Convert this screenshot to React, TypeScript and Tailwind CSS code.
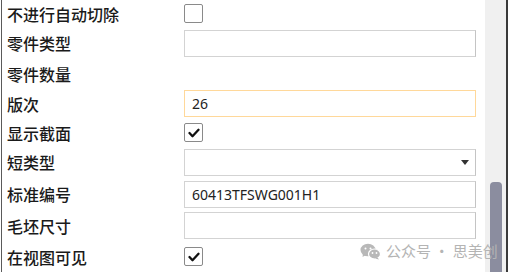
import React from "react";

const cjk = { fontFamily: '"Noto Sans CJK SC", "Noto Sans", sans-serif' };
const latin = { fontFamily: '"Noto Sans", "Noto Sans CJK SC", sans-serif' };

function Check({ checked }: { checked?: boolean }) {
  return (
    <div className="w-[19px] h-[19px] border-[1.5px] border-[#8a8a8a] rounded-[2px] bg-white flex items-center justify-center">
      {checked && (
        <svg width="12" height="10" viewBox="0 0 12 10">
          <path d="M1.5 5 L4.5 8.2 L10.5 1.8" fill="none" stroke="#111" strokeWidth="2.3" strokeLinecap="round" strokeLinejoin="round" />
        </svg>
      )}
    </div>
  );
}

function Box({ value, focus, dropdown }: { value?: string; focus?: boolean; dropdown?: boolean }) {
  return (
    <div
      className={
        "w-[292px] h-[27px] bg-white flex items-center pl-[7px] pr-[6px] text-[14px] text-[#222] border-[1.5px] " +
        (focus ? "border-[#ffd89a]" : "border-[#d3d3d3] border-r-[#c4c4c4]")
      }
      style={latin}
    >
      <span className="flex-1">{value}</span>
      {dropdown && (
        <svg width="8" height="5" viewBox="0 0 8 5">
          <path d="M0 0 L8 0 L4 5 Z" fill="#333" />
        </svg>
      )}
    </div>
  );
}

function Row({ h, label, children }: { h: number; label: string; children?: React.ReactNode }) {
  return (
    <div className="flex items-center" style={{ height: h }}>
      <div className="w-[182px] pl-[5px] text-[16px] text-[#1a1a1a] leading-none font-medium" style={cjk}>
        {label}
      </div>
      {children}
    </div>
  );
}

export default function App() {
  return (
    <div className="relative w-[508px] h-[272px] bg-white overflow-hidden flex">
      <div className="w-[1px] ml-[1px] bg-[#5a5a5a]" />
      <div className="flex-1 flex flex-col">
        <Row h={28} label="不进行自动切除"><Check /></Row>
        <Row h={31} label="零件类型"><Box /></Row>
        <Row h={31} label="零件数量" />
        <Row h={29} label="版次"><Box value="26" focus /></Row>
        <Row h={29} label="显示截面"><Check checked /></Row>
        <Row h={31} label="短类型"><Box dropdown /></Row>
        <Row h={33} label="标准编号"><Box value="60413TFSWG001H1" /></Row>
        <Row h={31} label="毛坯尺寸"><Box /></Row>
        <Row h={31} label="在视图可见"><Check checked /></Row>
      </div>
      <div className="w-[21px] bg-[#f0f0f0] flex justify-center pt-[182px]">
        <div className="w-[12px] h-[100px] bg-[#8b8d9f] rounded-t-[4px]" />
      </div>
      <div className="w-[2px] bg-[#3a3a3a]" />
      <div className="absolute left-[360px] top-[240px] flex items-center gap-[5px] text-[#b4b4b4] text-[15px]" style={cjk}>
        <svg width="21" height="17" viewBox="0 0 21 17">
          <ellipse cx="8" cy="7" rx="7.5" ry="6.3" fill="#b8b8b8" />
          <path d="M3 11 L2.5 14 L6 12 Z" fill="#b8b8b8" />
          <ellipse cx="14.5" cy="11" rx="6" ry="5" fill="#b8b8b8" stroke="#fff" strokeWidth="1.2" />
          <path d="M17.5 14.5 L19 16.5 L15 15.5 Z" fill="#b8b8b8" />
          <circle cx="5.5" cy="5.5" r="1" fill="#fff" />
          <circle cx="10.5" cy="5.5" r="1" fill="#fff" />
          <circle cx="12.5" cy="10" r="0.9" fill="#fff" />
          <circle cx="16.5" cy="10" r="0.9" fill="#fff" />
        </svg>
        <span>公众号 · 思美创</span>
      </div>
    </div>
  );
}
